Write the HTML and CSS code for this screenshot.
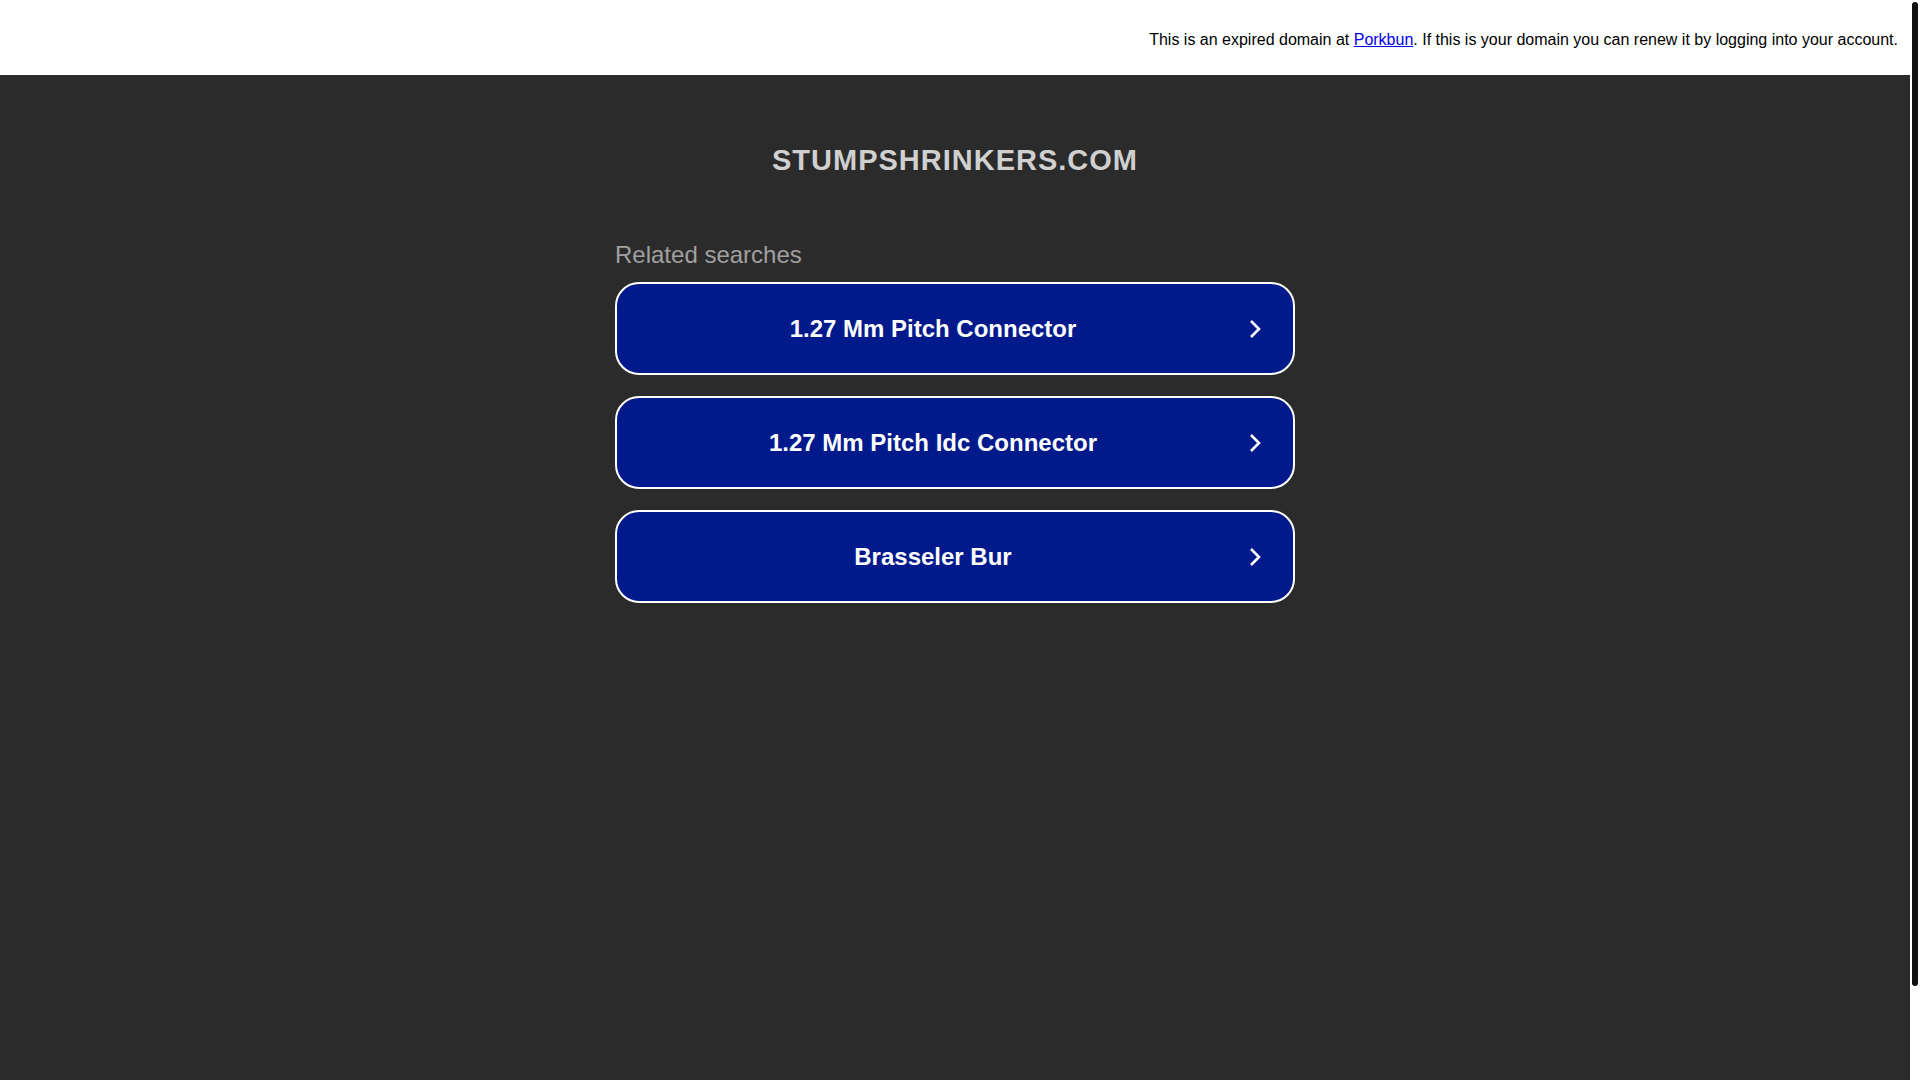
FILE: index.html
```html
<!DOCTYPE html>
<html lang="en">

<head>
    <meta charset="UTF-8">
    <meta name="viewport" content="width=device-width, initial-scale=1.0">
    <title>stumpshrinkers.com</title>
    <link rel="stylesheet" href="styles.css">
</head>

<body>
    <header class="notice">
        This is an expired domain at <a href="" class="notice__link">Porkbun</a>. If this is your domain you can renew it by logging into your account.
    </header>
    <main class="page">
        <h1 class="domain">stumpshrinkers.com</h1>
        <section class="related">
            <h2 class="related__title">Related searches</h2>
            <ul class="related__list">
                <li>
                    <a href="" class="related__link">
                        <span class="related__text">1.27 Mm Pitch Connector</span>
                        <svg class="related__arrow" viewBox="0 0 12 20" width="12" height="20">
                            <path d="M2 2l8 8-8 8" fill="none" stroke="#fff" stroke-width="2.6" />
                        </svg>
                    </a>
                </li>
                <li>
                    <a href="" class="related__link">
                        <span class="related__text">1.27 Mm Pitch Idc Connector</span>
                        <svg class="related__arrow" viewBox="0 0 12 20" width="12" height="20">
                            <path d="M2 2l8 8-8 8" fill="none" stroke="#fff" stroke-width="2.6" />
                        </svg>
                    </a>
                </li>
                <li>
                    <a href="" class="related__link">
                        <span class="related__text">Brasseler Bur</span>
                        <svg class="related__arrow" viewBox="0 0 12 20" width="12" height="20">
                            <path d="M2 2l8 8-8 8" fill="none" stroke="#fff" stroke-width="2.6" />
                        </svg>
                    </a>
                </li>
            </ul>
        </section>
    </main>
    <div class="scroll-track"><div class="scroll-track__thumb"></div></div>
</body>
</html>
```

FILE: styles.css
```css
html,
body {
    margin: 0;
    padding: 0;
}

html {
    background-color: #fff;
}

body {
    margin-right: 10px;
    background-color: #2b2b2b;
    font-family: "Liberation Sans", Arial, sans-serif;
}

.scroll-track {
    position: fixed;
    top: 0;
    right: 0;
    width: 10px;
    height: 100vh;
    background-color: #fff;
}

.scroll-track__thumb {
    margin: 2px 2px 0;
    height: 984px;
    border-radius: 3px;
    background-color: #111;
}

.notice {
    height: 75px;
    box-sizing: border-box;
    padding: 31px 12px 0 0;
    background-color: #fff;
    color: #000;
    font-size: 16px;
    text-align: right;
}

.notice__link,
.notice__link:visited {
    color: #00e;
}

.page {
    display: flex;
    flex-direction: column;
    align-items: center;
    padding-bottom: 580px;
}

.domain {
    margin: 69px 0 0;
    color: #d0d0d0;
    font-size: 29px;
    font-weight: bold;
    text-transform: uppercase;
    letter-spacing: 1px;
}

.related {
    width: 680px;
    margin-top: 64px;
}

.related__title {
    margin: 0 0 13px;
    color: #a0a0a0;
    font-size: 24px;
    font-weight: normal;
}

.related__list {
    list-style-type: none;
    margin: 0;
    padding: 0;
    display: flex;
    flex-direction: column;
    gap: 21px;
}

.related__link,
.related__link:visited {
    display: flex;
    align-items: center;
    height: 93px;
    box-sizing: border-box;
    padding: 0 32px 0 0;
    border: 2px solid #fff;
    border-radius: 24px;
    background-color: #011a8b;
    color: #fff;
    text-decoration: none;
}

.related__text {
    flex: 1;
    text-align: center;
    font-size: 24px;
    font-weight: bold;
}

.related__arrow {
    flex: none;
}
```
